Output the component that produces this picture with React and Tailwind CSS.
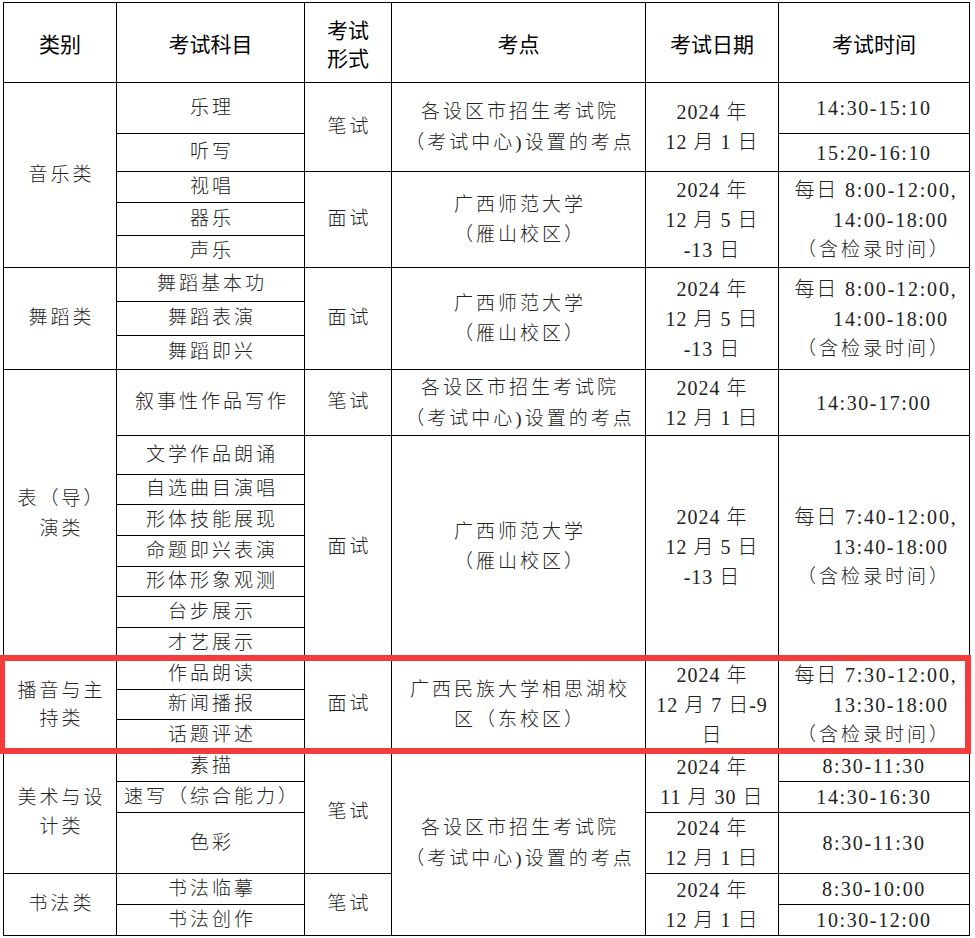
const td = "border border-black p-0 text-center align-middle whitespace-nowrap";
const th = "border border-black p-0 text-center align-middle font-normal";
const zh = "text-[19px] tracking-[3px]";
const num = "text-[20px] tracking-[1.6px]";

function Zh({ children, className = "" }) {
  return <div className={`${zh} pl-[3px] ${className}`}>{children}</div>;
}

function Date({ lines }) {
  return (
    <div className="text-[20px] leading-[30px] tracking-[1px]">
      {lines.map((l) => (
        <div key={l}>{l}</div>
      ))}
    </div>
  );
}

function Daily({ a, b }) {
  return (
    <div className="leading-[30px]">
      <div className="pl-[4px] text-[20px] tracking-[1.8px]">每日 {a},</div>
      <div className="pl-[34px] text-[20px] tracking-[1.6px]">{b}</div>
      <div className={zh}>（含检录时间）</div>
    </div>
  );
}

function Place() {
  return (
    <div className="leading-[31px]">
      <Zh>各设区市招生考试院</Zh>
      <Zh>（考试中心)设置的考点</Zh>
    </div>
  );
}

function Gxnu() {
  return (
    <div className="leading-[30px]">
      <Zh>广西师范大学</Zh>
      <Zh>（雁山校区）</Zh>
    </div>
  );
}

export default function App() {
  return (
    <div className="relative min-h-screen bg-white pl-[3px] pt-[2px] font-['Liberation_Serif','Noto_Sans_CJK_SC',serif] font-light text-[#222]">
      <table className="w-[966px] table-fixed border-collapse border border-black">
        <colgroup>
          <col className="w-[113px]" />
          <col className="w-[188px]" />
          <col className="w-[87px]" />
          <col className="w-[254px]" />
          <col className="w-[133px]" />
          <col className="w-[191px]" />
        </colgroup>
        <thead>
          <tr className="h-[80px] font-['Noto_Sans_CJK_SC',sans-serif] text-[21px] leading-[28px] text-black">
            <th className={th}>类别</th>
            <th className={th}>考试科目</th>
            <th className={th}>
              <div>考试</div>
              <div>形式</div>
            </th>
            <th className={th}>考点</th>
            <th className={th}>考试日期</th>
            <th className={th}>考试时间</th>
          </tr>
        </thead>
        <tbody>
          {/* 音乐类 */}
          <tr className="h-[51px]">
            <td rowSpan={5} className={td}>
              <Zh>音乐类</Zh>
            </td>
            <td className={td}>
              <Zh>乐理</Zh>
            </td>
            <td rowSpan={2} className={td}>
              <Zh>笔试</Zh>
            </td>
            <td rowSpan={2} className={td}>
              <Place />
            </td>
            <td rowSpan={2} className={td}>
              <Date lines={["2024 年", "12 月 1 日"]} />
            </td>
            <td className={`${td} ${num}`}>14:30-15:10</td>
          </tr>
          <tr className="h-[38px]">
            <td className={td}>
              <Zh>听写</Zh>
            </td>
            <td className={`${td} ${num}`}>15:20-16:10</td>
          </tr>
          <tr className="h-[31px]">
            <td className={td}>
              <Zh>视唱</Zh>
            </td>
            <td rowSpan={3} className={td}>
              <Zh>面试</Zh>
            </td>
            <td rowSpan={3} className={td}>
              <Gxnu />
            </td>
            <td rowSpan={3} className={td}>
              <Date lines={["2024 年", "12 月 5 日", "-13 日"]} />
            </td>
            <td rowSpan={3} className={td}>
              <Daily a="8:00-12:00" b="14:00-18:00" />
            </td>
          </tr>
          <tr className="h-[33px]">
            <td className={td}>
              <Zh>器乐</Zh>
            </td>
          </tr>
          <tr className="h-[32px]">
            <td className={td}>
              <Zh>声乐</Zh>
            </td>
          </tr>

          {/* 舞蹈类 */}
          <tr className="h-[34px]">
            <td rowSpan={3} className={td}>
              <Zh>舞蹈类</Zh>
            </td>
            <td className={td}>
              <Zh>舞蹈基本功</Zh>
            </td>
            <td rowSpan={3} className={td}>
              <Zh>面试</Zh>
            </td>
            <td rowSpan={3} className={td}>
              <Gxnu />
            </td>
            <td rowSpan={3} className={td}>
              <Date lines={["2024 年", "12 月 5 日", "-13 日"]} />
            </td>
            <td rowSpan={3} className={td}>
              <Daily a="8:00-12:00" b="14:00-18:00" />
            </td>
          </tr>
          <tr className="h-[34px]">
            <td className={td}>
              <Zh>舞蹈表演</Zh>
            </td>
          </tr>
          <tr className="h-[34px]">
            <td className={td}>
              <Zh>舞蹈即兴</Zh>
            </td>
          </tr>

          {/* 表（导）演类 */}
          <tr className="h-[66px]">
            <td rowSpan={8} className={`${td} leading-[30px]`}>
              <Zh>表（导）</Zh>
              <Zh>演类</Zh>
            </td>
            <td className={td}>
              <Zh>叙事性作品写作</Zh>
            </td>
            <td className={td}>
              <Zh>笔试</Zh>
            </td>
            <td className={td}>
              <Place />
            </td>
            <td className={td}>
              <Date lines={["2024 年", "12 月 1 日"]} />
            </td>
            <td className={`${td} ${num}`}>14:30-17:00</td>
          </tr>
          <tr className="h-[39px]">
            <td className={td}>
              <Zh>文学作品朗诵</Zh>
            </td>
            <td rowSpan={7} className={td}>
              <Zh>面试</Zh>
            </td>
            <td rowSpan={7} className={td}>
              <Gxnu />
            </td>
            <td rowSpan={7} className={td}>
              <Date lines={["2024 年", "12 月 5 日", "-13 日"]} />
            </td>
            <td rowSpan={7} className={td}>
              <Daily a="7:40-12:00" b="13:40-18:00" />
            </td>
          </tr>
          <tr className="h-[30px]">
            <td className={td}>
              <Zh>自选曲目演唱</Zh>
            </td>
          </tr>
          <tr className="h-[31px]">
            <td className={td}>
              <Zh>形体技能展现</Zh>
            </td>
          </tr>
          <tr className="h-[31px]">
            <td className={td}>
              <Zh>命题即兴表演</Zh>
            </td>
          </tr>
          <tr className="h-[30px]">
            <td className={td}>
              <Zh>形体形象观测</Zh>
            </td>
          </tr>
          <tr className="h-[31px]">
            <td className={td}>
              <Zh>台步展示</Zh>
            </td>
          </tr>
          <tr className="h-[31px]">
            <td className={td}>
              <Zh>才艺展示</Zh>
            </td>
          </tr>

          {/* 播音与主持类 */}
          <tr className="h-[31px]">
            <td rowSpan={3} className={`${td} leading-[28px]`}>
              <Zh>播音与主</Zh>
              <Zh>持类</Zh>
            </td>
            <td className={td}>
              <Zh>作品朗读</Zh>
            </td>
            <td rowSpan={3} className={td}>
              <Zh>面试</Zh>
            </td>
            <td rowSpan={3} className={`${td} leading-[30px]`}>
              <Zh>广西民族大学相思湖校</Zh>
              <Zh>区（东校区）</Zh>
            </td>
            <td rowSpan={3} className={td}>
              <Date lines={["2024 年", "12 月 7 日-9", "日"]} />
            </td>
            <td rowSpan={3} className={td}>
              <Daily a="7:30-12:00" b="13:30-18:00" />
            </td>
          </tr>
          <tr className="h-[30px]">
            <td className={td}>
              <Zh>新闻播报</Zh>
            </td>
          </tr>
          <tr className="h-[31px]">
            <td className={td}>
              <Zh>话题评述</Zh>
            </td>
          </tr>

          {/* 美术与设计类 */}
          <tr className="h-[31px]">
            <td rowSpan={3} className={`${td} leading-[29px]`}>
              <Zh>美术与设</Zh>
              <Zh>计类</Zh>
            </td>
            <td className={td}>
              <Zh>素描</Zh>
            </td>
            <td rowSpan={3} className={td}>
              <Zh>笔试</Zh>
            </td>
            <td rowSpan={5} className={td}>
              <Place />
            </td>
            <td rowSpan={2} className={td}>
              <Date lines={["2024 年", "11 月 30 日"]} />
            </td>
            <td className={`${td} ${num}`}>8:30-11:30</td>
          </tr>
          <tr className="h-[30px]">
            <td className={td}>
              <Zh className="tracking-[2px]">速写（综合能力）</Zh>
            </td>
            <td className={`${td} ${num}`}>14:30-16:30</td>
          </tr>
          <tr className="h-[61px]">
            <td className={td}>
              <Zh>色彩</Zh>
            </td>
            <td className={td}>
              <Date lines={["2024 年", "12 月 1 日"]} />
            </td>
            <td className={`${td} ${num}`}>8:30-11:30</td>
          </tr>

          {/* 书法类 */}
          <tr className="h-[31px]">
            <td rowSpan={2} className={td}>
              <Zh>书法类</Zh>
            </td>
            <td className={td}>
              <Zh>书法临摹</Zh>
            </td>
            <td rowSpan={2} className={td}>
              <Zh>笔试</Zh>
            </td>
            <td rowSpan={2} className={td}>
              <Date lines={["2024 年", "12 月 1 日"]} />
            </td>
            <td className={`${td} ${num}`}>8:30-10:00</td>
          </tr>
          <tr className="h-[31px]">
            <td className={td}>
              <Zh>书法创作</Zh>
            </td>
            <td className={`${td} ${num}`}>10:30-12:00</td>
          </tr>
        </tbody>
      </table>

      <div className="pointer-events-none absolute left-[-1px] top-[655px] h-[99px] w-[972px] border-[6px] border-[#f53c3c]" />
    </div>
  );
}
